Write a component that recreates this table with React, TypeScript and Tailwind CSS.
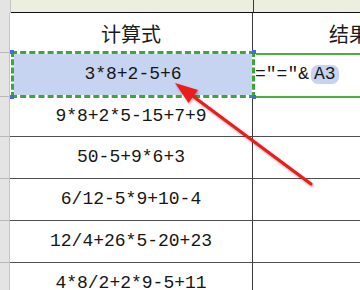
import React from 'react';

const mono = { fontFamily: '"Liberation Mono", "DejaVu Sans Mono", monospace' };
const cjk = { fontFamily: '"Noto Sans CJK SC", sans-serif' };

const formulas = [
  { h: 'h-[40px]', text: '9*8+2*5-15+7+9' },
  { h: 'h-[42px]', text: '50-5+9*6+3' },
  { h: 'h-[42px]', text: '6/12-5*9+10-4' },
  { h: 'h-[42px]', text: '12/4+26*5-20+23' },
  { h: 'h-[42px]', text: '4*8/2+2*9-5+11' },
];

const Row: React.FC<{ h: string; a?: React.ReactNode; b?: React.ReactNode }> = ({ h, a, b }) => (
  <div className={`flex ${h} shrink-0`}>
    <div className="w-[10px] bg-[#e4e4e4] border-r border-b border-r-[#c4c4c4] border-b-[#b8b8b8] shrink-0" />
    <div className="w-[243px] shrink-0 border-r border-b border-r-[#3a3a3a] border-b-[#505050] flex items-center justify-center text-[18px] text-[#161616] whitespace-nowrap" style={mono}>
      {a}
    </div>
    <div className="flex-1 border-b border-[#505050] flex items-center text-[18px] text-[#161616] whitespace-nowrap overflow-hidden" style={mono}>
      {b}
    </div>
  </div>
);

const Arrow: React.FC = () => (
  <svg className="absolute left-0 top-0 pointer-events-none" width="360" height="290" viewBox="0 0 360 290">
    <defs>
      <filter id="shade" x="-20%" y="-20%" width="140%" height="140%">
        <feDropShadow dx="1" dy="1.5" stdDeviation="1.2" floodColor="#000" floodOpacity="0.35" />
      </filter>
    </defs>
    <g filter="url(#shade)">
      <line x1="311" y1="184" x2="190" y2="94" stroke="#ea1c1c" strokeWidth="3.2" strokeLinecap="round" />
      <polygon points="175,83 188.5,103 198,90" fill="#ea1c1c" />
    </g>
  </svg>
);

export default function App() {
  return (
    <div className="relative w-[360px] h-[290px] overflow-hidden bg-white">
      {/* column header strip */}
      <div className="flex h-[13px]">
        <div className="w-[11px] bg-[#e4e4e4] border-r border-[#c4c4c4]" />
        <div className="w-[243px] bg-[#eceee0] border-r border-b border-r-[#3a3a3a] border-b-[#111]" />
        <div className="flex-1 bg-[#eceee0] border-b border-[#111]" />
      </div>

      <div className="flex h-[40px]">
        <div className="w-[10px] bg-[#e4e4e4] border-r border-b border-r-[#c4c4c4] border-b-[#b8b8b8] shrink-0" />
        <div className="w-[243px] shrink-0 border-r border-[#3a3a3a] flex items-center justify-center text-[20px] text-[#1b1b1b] pt-[2px]" style={cjk}>
          计算式
        </div>
        <div className="flex-1 flex items-center pl-[76px] text-[20px] text-[#1b1b1b] pt-[2px] whitespace-nowrap overflow-hidden" style={cjk}>
          结果
        </div>
      </div>

      <Row
        h="h-[44px]"
        b={
          <span className="pl-[2px] flex items-center">
            ="="&amp;
            <span className="ml-[2px] px-[3px] rounded-[7px] bg-[#c6d3f1] leading-[19px]">A3</span>
          </span>
        }
      />
      {formulas.map((f) => (
        <Row key={f.text} h={f.h} a={f.text} />
      ))}

      {/* copy marquee around A2 */}
      <div className="absolute left-[11px] top-[51px] w-[244px] h-[47px] bg-white">
        <div className="w-full h-full border-[3px] border-dashed border-[#3fa43a] bg-[#c6d3f1] bg-clip-padding flex items-center justify-center text-[18px] text-[#161616]" style={mono}>
          3*8+2-5+6
        </div>
        <span className="absolute -left-[1px] -top-[1px] w-[4px] h-[4px] bg-[#3d6fd6]" />
        <span className="absolute -right-[1px] -top-[1px] w-[4px] h-[4px] bg-[#3d6fd6]" />
        <span className="absolute -left-[1px] -bottom-[1px] w-[4px] h-[4px] bg-[#3d6fd6]" />
        <span className="absolute -right-[1px] -bottom-[1px] w-[4px] h-[4px] bg-[#3d6fd6]" />
      </div>

      {/* editing cell B2 */}
      <div className="absolute left-[256px] right-0 top-[53px] h-[45px] border-y-2 border-[#4cae3f] pointer-events-none" />

      <Arrow />
    </div>
  );
}
